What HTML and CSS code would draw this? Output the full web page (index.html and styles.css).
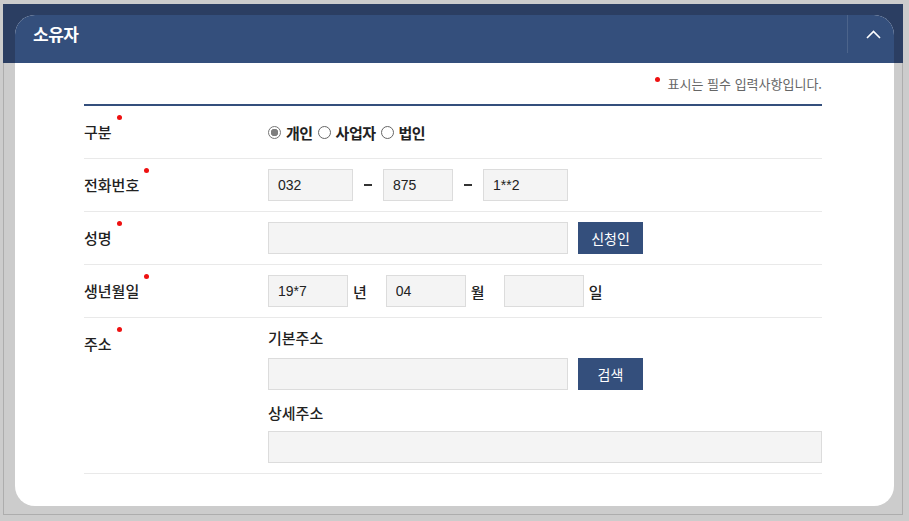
FILE: index.html
```html
<!DOCTYPE html>
<html lang="ko">
<head>
  <meta charset="UTF-8" />
  <meta name="viewport" content="width=device-width, initial-scale=1.0"/>
  <title>소유자 정보</title>
  <link rel="stylesheet" href="styles.css">
</head>
<body>
  <div class="frame">
    <section class="card">
      <!-- Card header -->
      <header class="card-head">
        <h2 class="card-title">소유자</h2>
        <button class="fold-btn" type="button" aria-label="접기">
          <svg width="15" height="9" viewBox="0 0 15 9"><polyline points="1,8 7.5,1.5 14,8" fill="none" stroke="#fff" stroke-width="1.6"/></svg>
        </button>
      </header>

      <div class="card-body">
        <p class="notice"><span class="notice-dot"></span>표시는 필수 입력사항입니다.</p>

        <div class="form-table">
          <div class="form-row">
            <div class="form-label"><span class="req">구분</span></div>
            <div class="form-field">
              <label class="radio"><input type="radio" name="kind" checked>개인</label>
              <label class="radio"><input type="radio" name="kind">사업자</label>
              <label class="radio"><input type="radio" name="kind">법인</label>
            </div>
          </div>

          <div class="form-row">
            <div class="form-label"><span class="req">전화번호</span></div>
            <div class="form-field">
              <input class="inp w85" type="text" value="032">
              <span class="dash"></span>
              <input class="inp w70" type="text" value="875">
              <span class="dash"></span>
              <input class="inp w85" type="text" value="1**2">
            </div>
          </div>

          <div class="form-row">
            <div class="form-label"><span class="req">성명</span></div>
            <div class="form-field">
              <input class="inp w300" type="text" value="">
              <button class="btn" type="button">신청인</button>
            </div>
          </div>

          <div class="form-row">
            <div class="form-label"><span class="req">생년월일</span></div>
            <div class="form-field">
              <input class="inp w80" type="text" value="19*7">
              <span class="unit">년</span>
              <input class="inp w80" type="text" value="04">
              <span class="unit">월</span>
              <input class="inp w80" type="text" value="">
              <span class="unit">일</span>
            </div>
          </div>

          <div class="form-row addr">
            <div class="form-label"><span class="req">주소</span></div>
            <div class="form-field stack">
              <div class="sub-label">기본주소</div>
              <div class="line">
                <input class="inp w300" type="text">
                <button class="btn" type="button">검색</button>
              </div>
              <div class="sub-label second">상세주소</div>
              <input class="inp full" type="text">
            </div>
          </div>
        </div>
      </div>
    </section>
  </div>
</body>
</html>
```

FILE: styles.css
```css
:root {
  --navy: #344f7c;
  --navy-dark: #2b3e62;
  --line: #e9e9e9;
  --red: #ee1111;
}

body {
  margin: 0;
  background: #cccccc;
  font-family: "Noto Sans CJK KR", "Noto Sans", sans-serif;
  color: #222;
}

.frame {
  position: relative;
  width: 900px;
  height: 511px;
  margin: 4px 0 0 3px;
  box-sizing: border-box;
  border: 1px solid #adadad;
  border-top: 0;
  padding: 11px 8px 8px 11px;
}

.frame::before {
  content: '';
  position: absolute;
  top: 0;
  left: -1px;
  right: -1px;
  height: 59px;
  background: var(--navy-dark);
}

.card {
  position: relative;
  height: 100%;
  background: #fff;
  border-radius: 20px;
  overflow: hidden;
}

.card-head {
  height: 48px;
  box-sizing: border-box;
  padding-bottom: 10px;
  background: var(--navy);
  display: flex;
  align-items: center;
  justify-content: space-between;
}

.card-title {
  margin: 0;
  padding-left: 18px;
  font-size: 17px;
  font-weight: 700;
  letter-spacing: -0.5px;
  line-height: 38px;
  color: #fff;
}

.fold-btn {
  width: 47px;
  height: 38px;
  border: 0;
  border-left: 1px solid rgba(255, 255, 255, 0.12);
  background: none;
  padding: 0 0 0 4px;
  display: flex;
  align-items: center;
  justify-content: center;
  cursor: pointer;
}

.card-body {
  padding: 0 72px 0 69px;
}

.notice {
  margin: 0;
  height: 41px;
  display: flex;
  align-items: center;
  justify-content: flex-end;
  font-size: 13px;
  color: #666;
}

.notice-dot {
  width: 5px;
  height: 5px;
  border-radius: 50%;
  background: var(--red);
  margin: 0 8px 9px 0;
}

.form-table {
  border-top: 2px solid var(--navy);
}

.form-row {
  display: flex;
  align-items: center;
  min-height: 52px;
  border-bottom: 1px solid var(--line);
}

.form-label {
  width: 184px;
  flex: none;
  font-size: 15px;
  font-weight: 500;
  line-height: 20px;
}

.req::after {
  content: '';
  display: inline-block;
  position: relative;
  top: -7px;
  width: 5px;
  height: 5px;
  margin-left: 5px;
  border-radius: 50%;
  background: var(--red);
  vertical-align: top;
}

.form-field {
  flex: 1;
  display: flex;
  align-items: center;
}

.radio {
  display: inline-flex;
  align-items: center;
  margin-right: 5px;
  font-size: 15px;
  font-weight: 600;
  letter-spacing: -0.5px;
}

.radio input {
  appearance: none;
  width: 13px;
  height: 13px;
  margin: 0 5px 0 0;
  border: 1px solid #666;
  border-radius: 50%;
  background: #fff;
}

.radio input:checked {
  border-color: #777;
  background: radial-gradient(circle, #7f7f7f 0 3.5px, #fff 4px);
}

.inp {
  height: 32px;
  box-sizing: border-box;
  border: 1px solid #dcdcdc;
  background: #f4f4f4;
  padding: 0 9px;
  font: 14px "Liberation Sans", Arial, sans-serif;
  color: #222;
  outline: none;
}

.w70 { width: 70px; }
.w80 { width: 80px; }
.w85 { width: 85px; }
.w300 { width: 300px; }
.full { width: 554px; }

.dash {
  width: 8px;
  height: 2px;
  margin: 0 11px;
  background: #333;
}

.btn {
  height: 32px;
  width: 65px;
  margin-left: 10px;
  border: 0;
  background: var(--navy);
  color: #fff;
  font-family: inherit;
  font-size: 14px;
  cursor: pointer;
}

.unit {
  margin: 0 19px 0 5px;
  font-size: 15px;
  font-weight: 500;
}

.form-row.addr {
  align-items: flex-start;
}

.form-row.addr .form-label {
  padding-top: 16px;
}

.form-field.stack {
  flex-direction: column;
  align-items: flex-start;
  padding: 10px 0;
}

.sub-label {
  font-size: 15px;
  font-weight: 500;
  line-height: 20px;
  margin-bottom: 10px;
}

.sub-label.second {
  margin: 13px 0 8px;
}

.line {
  display: flex;
}
```
